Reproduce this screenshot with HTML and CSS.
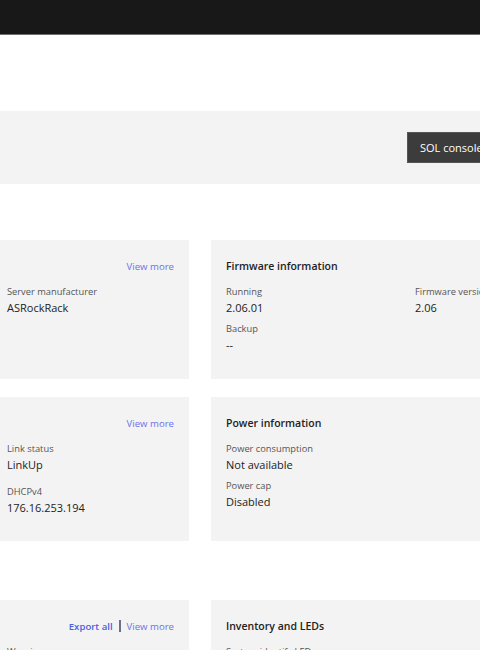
FILE: index.html
```html
<!DOCTYPE html>
<html lang="en">
<head>
    <meta charset="UTF-8">
    <meta name="viewport" content="width=device-width, initial-scale=1.0">
    <title>Overview</title>
    <link rel="stylesheet" href="styles.css">
</head>
<body>
    <header class="app-header"></header>

    <div class="page">
        <div class="quick-links">
            <button class="btn-sol">SOL console</button>
        </div>

        <div class="card-row first-row">
            <div class="overview-card card-left">
                <div class="card-head">
                    <a class="link" href="#">View more</a>
                </div>
                <div class="field">
                    <div class="field-label">Server manufacturer</div>
                    <div class="field-value">ASRockRack</div>
                </div>
            </div>
            <div class="overview-card card-right">
                <div class="card-head">
                    <h2 class="card-title">Firmware information</h2>
                </div>
                <div class="card-cols">
                    <div class="col">
                        <div class="field">
                            <div class="field-label">Running</div>
                            <div class="field-value">2.06.01</div>
                        </div>
                        <div class="field">
                            <div class="field-label">Backup</div>
                            <div class="field-value">--</div>
                        </div>
                    </div>
                    <div class="col">
                        <div class="field">
                            <div class="field-label">Firmware version</div>
                            <div class="field-value">2.06</div>
                        </div>
                    </div>
                </div>
            </div>
        </div>

        <div class="card-row second-row">
            <div class="overview-card card-left">
                <div class="card-head">
                    <a class="link" href="#">View more</a>
                </div>
                <div class="field">
                    <div class="field-label">Link status</div>
                    <div class="field-value">LinkUp</div>
                </div>
                <div class="field spaced">
                    <div class="field-label">DHCPv4</div>
                    <div class="field-value">176.16.253.194</div>
                </div>
            </div>
            <div class="overview-card card-right">
                <div class="card-head">
                    <h2 class="card-title">Power information</h2>
                </div>
                <div class="field">
                    <div class="field-label">Power consumption</div>
                    <div class="field-value">Not available</div>
                </div>
                <div class="field">
                    <div class="field-label">Power cap</div>
                    <div class="field-value">Disabled</div>
                </div>
            </div>
        </div>

        <div class="card-row third-row">
            <div class="overview-card card-left">
                <div class="card-head">
                    <a class="link strong" href="#">Export all</a>
                    <span class="sep"></span>
                    <a class="link" href="#">View more</a>
                </div>
                <div class="field">
                    <div class="field-label">Warnings</div>
                </div>
            </div>
            <div class="overview-card card-right">
                <div class="card-head">
                    <h2 class="card-title">Inventory and LEDs</h2>
                </div>
                <div class="field">
                    <div class="field-label">System identify LED</div>
                </div>
            </div>
        </div>
    </div>
</body>
</html>
```

FILE: styles.css
```css
html, body {
    margin: 0;
    padding: 0;
    overflow: hidden;
}

body {
    font-family: "Open Sans", "Noto Sans", sans-serif;
    background: #fff;
    color: #222;
    width: 480px;
}

.app-header {
    height: 34px;
    background-color: #181818;
    border-bottom: 1px solid #6e6e6e;
}

.quick-links {
    margin-top: 76px;
    height: 73px;
    background-color: #f3f3f3;
    display: flex;
    align-items: center;
    padding-left: 407px;
}

.btn-sol {
    flex-shrink: 0;
    height: 31px;
    padding: 0 12px;
    background-color: #3c3c3c;
    border: 1px solid #555;
    color: #fff;
    font-family: inherit;
    font-size: 11px;
    white-space: nowrap;
}

.card-row {
    display: flex;
    gap: 22px;
    margin-left: -8px;
    width: 900px;
}

.first-row {
    margin-top: 56px;
}

.second-row {
    margin-top: 18px;
}

.third-row {
    margin-top: 59px;
}

.overview-card {
    flex-shrink: 0;
    background-color: #f3f3f3;
    padding: 16px 15px 15px;
    box-sizing: border-box;
}

.card-left {
    width: 197px;
}

.card-right {
    width: 500px;
}

.first-row .overview-card {
    height: 139px;
}

.second-row .overview-card {
    height: 144px;
}

.third-row .overview-card {
    height: 80px;
}

.card-head {
    height: 20px;
    display: flex;
    align-items: center;
    justify-content: flex-end;
    gap: 6px;
    margin-bottom: 8px;
}

.card-right .card-head {
    justify-content: flex-start;
}

.card-title {
    margin: 0;
    font-size: 10.5px;
    font-weight: 600;
    color: #222;
}

.link {
    font-size: 9.6px;
    color: #6b72ea;
    text-decoration: none;
}

.link.strong {
    font-weight: 600;
    color: #4d5ee0;
}

.sep {
    width: 2px;
    height: 12px;
    background-color: #6a6f8c;
}

.card-cols {
    display: flex;
}

.card-cols .col {
    width: 189px;
    flex-shrink: 0;
}

.field {
    margin-bottom: 5px;
}

.field.spaced {
    margin-top: 11px;
}

.field-label {
    font-size: 9.3px;
    color: #555;
    line-height: 16px;
}

.field-value {
    font-size: 11px;
    color: #222;
    line-height: 16px;
}
```
